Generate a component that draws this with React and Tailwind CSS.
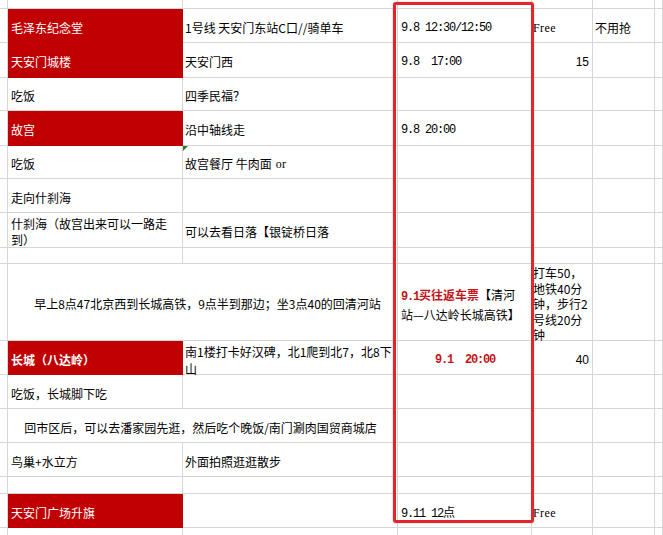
import React from 'react';

const cjk = "font-['Noto_Sans_CJK_SC',sans-serif]";
const mono = "font-['Liberation_Mono',monospace] tracking-[-1.2px]";
const serif = "font-['Liberation_Serif',serif] tracking-[0.4px]";
const redText = 'text-[#c4161c] font-bold';

// one spreadsheet cell; red = filled header cell
function Cell({ children, red, span, className = '' }) {
  return (
    <div
      className={[
        'relative flex items-center overflow-visible whitespace-nowrap pt-[4px] text-[12px] leading-[16px]',
        red
          ? 'bg-[#c00000] text-white border-r border-b border-[#c00000]'
          : 'text-black border-r border-b border-[#d6d6d6]',
        span ? 'col-span-2' : '',
        className,
      ]
        .filter(Boolean)
        .join(' ')}
    >
      {children}
    </div>
  );
}

const padA = 'pl-[3px]';
const padB = 'pl-[2px]';
const padC = 'pl-[3px]';
const padD = 'pl-[1px]';
const padE = 'pl-[2px]';

function Row({ a, aRed, b, c, d, e, span, aClass = '', bClass = '', cClass = '', dClass = '', bExtra }) {
  return (
    <>
      <Cell />
      {span ? (
        <Cell span className="justify-center">
          {span}
        </Cell>
      ) : (
        <>
          <Cell red={aRed} className={`${padA} ${aClass}`}>
            {a}
          </Cell>
          <Cell className={`${padB} ${bClass}`}>
            {bExtra}
            {b}
          </Cell>
        </>
      )}
      <Cell className={`${padC} ${cClass}`}>{c}</Cell>
      <Cell className={`${padD} ${dClass}`}>{d}</Cell>
      <Cell className={padE}>{e}</Cell>
      <Cell />
    </>
  );
}

export default function App() {
  return (
    <div className={`relative h-[535px] w-[663px] overflow-hidden bg-white ${cjk}`}>
      <div className="grid grid-cols-[8px_175px_215px_134px_61px_62px_8px] grid-rows-[9px_34px_35px_33px_35px_33px_34px_35px_16px_77px_34px_34px_34px_34px_17px_34px_30px]">
        <Row />
        <Row
          aRed
          a="毛泽东纪念堂"
          b="1号线 天安门东站C口//骑单车"
          c={<span className={mono}>9.8 12:30/12:50</span>}
          d={<span className={serif}>Free</span>}
          e="不用抢"
        />
        <Row
          aRed
          a="天安门城楼"
          b="天安门西"
          c={<span className={`${mono} whitespace-pre`}>9.8  17:00</span>}
          d={<span className="font-['Liberation_Sans',sans-serif]">15</span>}
          dClass="justify-end pr-[3px]"
        />
        <Row a="吃饭" b="四季民福？" />
        <Row aRed a="故宫" b="沿中轴线走" c={<span className={mono}>9.8 20:00</span>} />
        <Row
          a="吃饭"
          b={
            <>
              故宫餐厅 牛肉面 <span className={`${serif} ml-[4px]`}>or</span>
            </>
          }
          bExtra={
            <span className="absolute left-0 top-0 h-0 w-0 border-r-[5px] border-t-[5px] border-r-transparent border-t-[#1e7b34]" />
          }
        />
        <Row a="走向什刹海" />
        <Row
          a={
            <span>
              什刹海（故宫出来可以一路走
              <br />
              到）
            </span>
          }
          aClass="pt-[2px]"
          b="可以去看日落【银锭桥日落"
        />
        <Row />
        <Row
          span={<span className="pl-[10px]">早上8点47北京西到长城高铁，9点半到那边；坐3点40的回清河站</span>}
          c={
            <span className="leading-[17px]">
              <span className={redText}>
                <span className={mono}>9.1</span>买往返车票
              </span>
              【清河
              <br />
              站—八达岭长城高铁】
            </span>
          }
          d={
            <span className="leading-[15.5px]">
              打车50，
              <br />
              地铁40分
              <br />
              钟，步行2
              <br />
              号线20分
              <br />
              钟
            </span>
          }
          dClass="pt-[0px]"
        />
        <Row
          aRed
          a={<span className="font-bold">长城（八达岭）</span>}
          b={
            <span className="leading-[17px]">
              南1楼打卡好汉碑，北1爬到北7，北8下
              <br />
              山
            </span>
          }
          bClass="pt-0"
          c={<span className={`${redText} ${mono} whitespace-pre`}>9.1  20:00</span>}
          cClass="justify-center pl-[0px] pr-[2px]"
          d={<span className="font-['Liberation_Sans',sans-serif]">40</span>}
          dClass="justify-end pr-[3px]"
        />
        <Row a="吃饭，长城脚下吃" />
        <Row span={<span className="pr-[4px]">回市区后，可以去潘家园先逛，然后吃个晚饭/南门涮肉国贸商城店</span>} />
        <Row a="鸟巢+水立方" b="外面拍照逛逛散步" />
        <Row />
        <Row
          aRed
          a="天安门广场升旗"
          c={
            <span>
              <span className={mono}>9.11 12</span>点
            </span>
          }
          d={<span className={serif}>Free</span>}
        />
        <Row />
      </div>

      {/* red highlight frame over the time column */}
      <div className="pointer-events-none absolute left-[393px] top-[2px] h-[521px] w-[141px] rounded-[3px] border-[3px] border-[#e3262b] shadow-[0_0_1px_#e3262b]" />
    </div>
  );
}
